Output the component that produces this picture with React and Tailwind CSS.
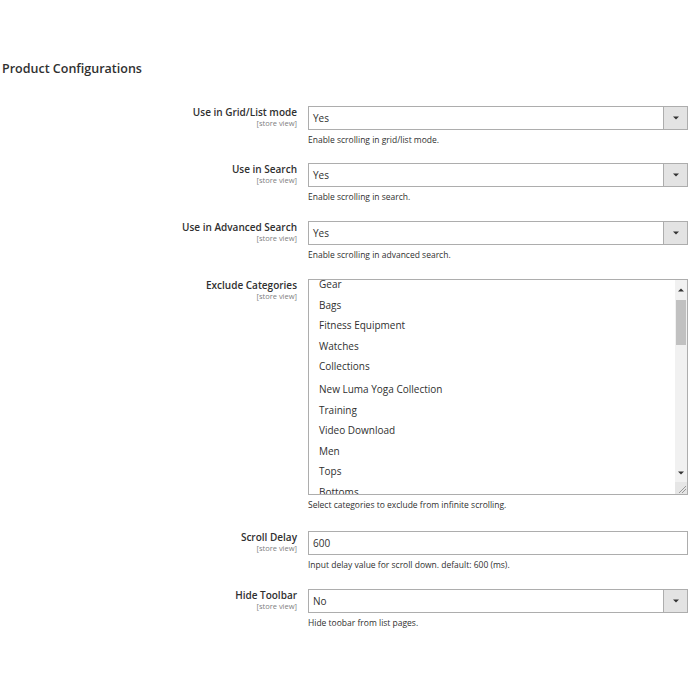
import React from 'react';

const font = { fontFamily: '"Open Sans", "Liberation Sans", sans-serif' };

const Arrow = ({ up }) => (
    <svg width="6" height="4" viewBox="0 0 6 4" className={up ? 'rotate-180' : ''}>
        <path d="M0 0.5h6L3 3.5z" fill="#333" />
    </svg>
);

const Label = ({ text }) => (
    <div className="flex flex-col items-end">
        <span className="text-[10px] font-semibold leading-[12px] text-[#303030]">{text}</span>
        <span className="text-[7.5px] leading-[10px] text-[#808080]">[store view]</span>
    </div>
);

const Note = ({ children }) => (
    <p className="mt-[4px] text-[8.5px] leading-[12px] text-[#303030]">{children}</p>
);

const SelectBox = ({ value }) => (
    <div className="flex h-[24px] border border-[#adadad] bg-white">
        <div className="flex-1 flex items-center pl-[4px] text-[10px] text-[#303030]">{value}</div>
        <div className="w-[24px] flex items-center justify-center border-l border-[#adadad] bg-[#e3e3e3]">
            <Arrow />
        </div>
    </div>
);

const Row = ({ label, children, note, className = '' }) => (
    <div className={`flex gap-[11px] ${className}`}>
        <div className="w-[297px] shrink-0">
            <Label text={label} />
        </div>
        <div className="w-[380px]">
            {children}
            <Note>{note}</Note>
        </div>
    </div>
);

const categories = [
    'Gear',
    'Bags',
    'Fitness Equipment',
    'Watches',
    'Collections',
    'New Luma Yoga Collection',
    'Training',
    'Video Download',
    'Men',
    'Tops',
    'Bottoms',
];

const MultiSelect = () => (
    <div className="flex h-[216px] border border-[#adadad] bg-white overflow-hidden">
        <div className="flex-1 overflow-hidden">
            <ul className="-mt-[6px] pl-[10px]">
                {categories.map((c, i) => (
                    <li
                        key={c}
                        className={`h-[20.6px] leading-[20.6px] text-[10px] text-[#303030] ${i === 5 ? 'mt-[2px]' : ''}`}
                    >
                        {c}
                    </li>
                ))}
            </ul>
        </div>
        <div className="w-[12px] flex flex-col bg-[#f1f1f1]">
            <div className="h-[20px] flex items-center justify-center">
                <Arrow up />
            </div>
            <div className="mx-[1px] h-[45px] bg-[#c1c1c1]" />
            <div className="flex-1" />
            <div className="h-[18px] flex items-center justify-center">
                <Arrow />
            </div>
            <div className="h-[12px] relative bg-[#e6e6e6]">
                <svg width="12" height="12" viewBox="0 0 12 12" className="absolute inset-0">
                    <path d="M11 4L4 11M11 7L7 11" stroke="#999" strokeWidth="1" />
                </svg>
            </div>
        </div>
    </div>
);

export default function App() {
    return (
        <div className="w-[700px] h-[700px] bg-white" style={font}>
            <h2 className="pt-[60px] pl-[2px] text-[12.5px] font-semibold leading-[18px] text-[#303030]">
                Product Configurations
            </h2>
            <div className="mt-[28px] flex flex-col">
                <Row label="Use in Grid/List mode" note="Enable scrolling in grid/list mode.">
                    <SelectBox value="Yes" />
                </Row>
                <Row className="mt-[17px]" label="Use in Search" note="Enable scrolling in search.">
                    <SelectBox value="Yes" />
                </Row>
                <Row className="mt-[18px]" label="Use in Advanced Search" note="Enable scrolling in advanced search.">
                    <SelectBox value="Yes" />
                </Row>
                <Row className="mt-[18px]" label="Exclude Categories" note="Select categories to exclude from infinite scrolling.">
                    <MultiSelect />
                </Row>
                <Row className="mt-[20px]" label="Scroll Delay" note="Input delay value for scroll down. default: 600 (ms).">
                    <div className="h-[24px] border border-[#adadad] bg-white flex items-center pl-[4px] text-[10px] text-[#303030]">
                        600
                    </div>
                </Row>
                <Row className="mt-[18px]" label="Hide Toolbar" note="Hide toobar from list pages.">
                    <SelectBox value="No" />
                </Row>
            </div>
        </div>
    );
}
